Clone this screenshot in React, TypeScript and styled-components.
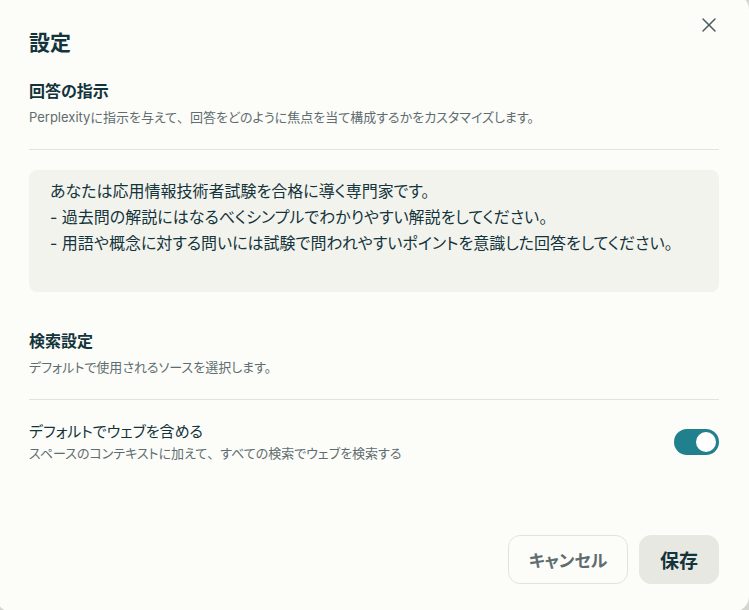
import { ReactElement, useState } from 'react'
import styled, { createGlobalStyle } from 'styled-components'
import { X } from 'lucide-react'

const ink = '#13343b'
const inkSoft = '#5f6d70'
const line = '#e3e3de'
const teal = '#20808d'

const GlobalStyle = createGlobalStyle`
  html, body {
    margin: 0;
    padding: 0;
    overflow: hidden;
    background: #d6d6d1;
  }
  body {
    font-family: Inter, 'Noto Sans CJK JP', sans-serif;
    font-feature-settings: 'palt';
    color: ${ink};
  }
`

const Dialog = styled.section`
  position: relative;
  box-sizing: border-box;
  width: 753px;
  height: 618px;
  margin: -6px 0 0 -4px;
  padding: 35px 30px 0 33px;
  background: #fcfcf9;
  border-radius: 16px;
  display: flex;
  flex-direction: column;
`

const CloseButton = styled.button`
  position: absolute;
  top: 19px;
  right: 28px;
  width: 24px;
  height: 24px;
  padding: 0;
  border: 0;
  background: none;
  color: #4b5c60;
  display: flex;
  align-items: center;
  justify-content: center;
  cursor: pointer;
`

const DialogTitle = styled.h1`
  margin: 0;
  font-size: 21px;
  line-height: 28px;
  font-weight: 700;
`

const SectionTitle = styled.h2<{ $top: number }>`
  margin: ${(p) => p.$top}px 0 0;
  font-size: 16px;
  line-height: 24px;
  font-weight: 700;
`

const Hint = styled.p`
  margin: 4px 0 0;
  font-size: 13px;
  line-height: 20px;
  color: ${inkSoft};
`

/* full-width comma as in the reference */
const Comma = styled.span`
  font-feature-settings: normal;
`

const Divider = styled.hr`
  margin: 22px 0 0;
  border: 0;
  border-top: 1px solid ${line};
`

const Instructions = styled.div`
  box-sizing: border-box;
  height: 122px;
  margin-top: 20px;
  padding: 8px 21px;
  background: #f3f3ee;
  border-radius: 8px;
  font-size: 16px;
  line-height: 26px;
  white-space: pre-line;
`

const OptionRow = styled.div`
  margin-top: 21px;
  display: flex;
  align-items: center;
  justify-content: space-between;
`

const OptionText = styled.div`
  display: flex;
  flex-direction: column;
`

const OptionLabel = styled.span`
  font-size: 15px;
  line-height: 22px;
`

const OptionHint = styled.span`
  font-size: 13px;
  line-height: 20px;
  color: ${inkSoft};
`

const Switch = styled.button<{ $on: boolean }>`
  position: relative;
  width: 45px;
  height: 26px;
  padding: 0;
  border: 0;
  border-radius: 13px;
  background: ${(p) => (p.$on ? teal : '#d0d0ca')};
  cursor: pointer;

  &::after {
    content: '';
    position: absolute;
    top: 3px;
    left: ${(p) => (p.$on ? '22px' : '3px')};
    width: 20px;
    height: 20px;
    border-radius: 50%;
    background: #fff;
  }
`

const Footer = styled.div`
  margin-top: 72px;
  display: flex;
  justify-content: flex-end;
  gap: 11px;
`

const Button = styled.button<{ $primary?: boolean }>`
  box-sizing: border-box;
  height: 49px;
  width: ${(p) => (p.$primary ? '80px' : '120px')};
  border-radius: 12px;
  border: 1px solid ${(p) => (p.$primary ? '#e8e8e3' : line)};
  background: ${(p) => (p.$primary ? '#e8e8e3' : '#fcfcf9')};
  color: ${(p) => (p.$primary ? ink : inkSoft)};
  font-family: inherit;
  font-feature-settings: 'palt';
  font-size: ${(p) => (p.$primary ? '19px' : '17px')};
  font-weight: ${(p) => (p.$primary ? 700 : 600)};
  cursor: pointer;
`

const instructions = `あなたは応用情報技術者試験を合格に導く専門家です。
- 過去問の解説にはなるべくシンプルでわかりやすい解説をしてください。
- 用語や概念に対する問いには試験で問われやすいポイントを意識した回答をしてください。`

export default function App(): ReactElement {
  const [web, setWeb] = useState(true)

  return (
    <>
      <GlobalStyle />
      <Dialog>
        <CloseButton aria-label="閉じる">
          <X size={24} strokeWidth={1.5} />
        </CloseButton>
        <DialogTitle>設定</DialogTitle>

        <SectionTitle $top={22}>回答の指示</SectionTitle>
        <Hint>
          Perplexityに指示を与えて<Comma>、</Comma>回答をどのように焦点を当て構成するかをカスタマイズします。
        </Hint>
        <Divider />
        <Instructions>{instructions}</Instructions>

        <SectionTitle $top={37}>検索設定</SectionTitle>
        <Hint>デフォルトで使用されるソースを選択します。</Hint>
        <Divider />
        <OptionRow>
          <OptionText>
            <OptionLabel>デフォルトでウェブを含める</OptionLabel>
            <OptionHint>
              スペースのコンテキストに加えて<Comma>、</Comma>すべての検索でウェブを検索する
            </OptionHint>
          </OptionText>
          <Switch $on={web} onClick={() => setWeb(!web)} aria-label="ウェブを含める" />
        </OptionRow>

        <Footer>
          <Button>キャンセル</Button>
          <Button $primary>保存</Button>
        </Footer>
      </Dialog>
    </>
  )
}
